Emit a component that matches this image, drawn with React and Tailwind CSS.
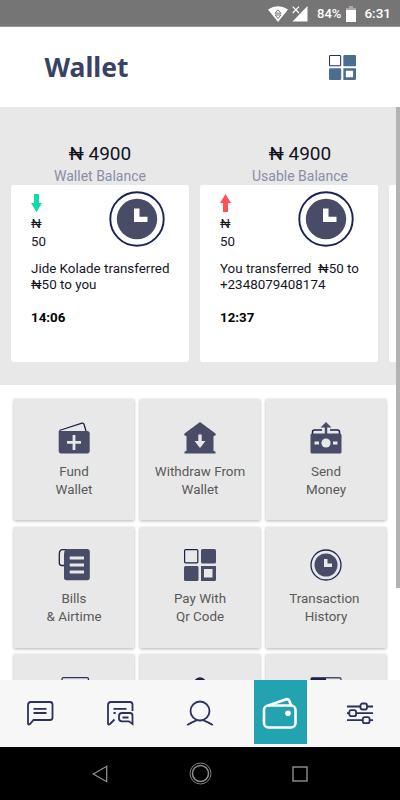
import React from 'react';

const QrIcon = ({ width, height, color, edge }) => (
  <svg width={width} height={height} viewBox="0 0 32 32" preserveAspectRatio="none" fill="none">
    <rect x="0.6" y="0.6" width="13.2" height="13.2" rx="1" stroke={edge} strokeWidth="1.2" />
    <rect x="17" y="0" width="15" height="14.5" rx="1.5" fill={color} />
    <rect x="0" y="17" width="14.5" height="15" rx="1.5" fill={color} />
    <path fillRule="evenodd" d="M17 17h15v13.5a1.5 1.5 0 0 1-1.5 1.5H17zM20 20v8.5h8.5V20z" fill={color} />
  </svg>
);

const ClockIcon = () => (
  <svg width="56" height="56" viewBox="0 0 56 56" fill="none">
    <circle cx="28" cy="28" r="26.7" stroke="#1b2450" strokeWidth="1.9" />
    <circle cx="28" cy="28" r="20.2" fill="#484c66" />
    <path d="M25 17.500h5.500v8.300h8v5.200H25z" fill="#fff" />
  </svg>
);

const FundIcon = () => (
  <svg width="32" height="32" viewBox="0 0 32 32" fill="none">
    <path d="M1.300 8.500 24 1.200c1-.3 1.700.1 2 1L28 9" stroke="#1b2148" strokeWidth="1.300" />
    <path d="M.7 9h28.500c1.500 0 2.500 1 2.500 2.300V29c0 1.500-1 2.500-2.500 2.500h-26C1.700 31.500.7 30.500.7 29z" fill="#484c66" />
    <path d="M16 13v15M9 20.400h14" stroke="#e8e8e8" strokeWidth="2.800" />
  </svg>
);

const WithdrawIcon = () => (
  <svg width="32" height="32" viewBox="0 0 32 32" fill="none">
    <path d="M16 0 31.500 11.500c.7 1.700-.2 2.600-2 2.500V29l2 .6v2H.5v-2l2-.6V14c-1.800.1-2.700-.8-2-2.500z" fill="#484c66" />
    <path d="M14.300 12.500h3.400V19h3.800L16 26l-5.500-7h3.800z" fill="#e8e8e8" />
  </svg>
);

const SendIcon = () => (
  <svg width="32" height="32" viewBox="0 0 32 32" fill="none">
    <path d="M12 8H4.500Q2.500 8 2.500 10v3M20 8h7.500q2 0 2 2v3" stroke="#1b2148" strokeWidth="1.500" />
    <path d="M16 0 21.500 5.500H17.200V12h-2.400V5.500H10.500z" fill="#484c66" />
    <path d="M2 11.500h28q1.500 0 1.500 1.500v17q0 1.500-1.500 1.500H2q-1.500 0-1.500-1.500V13q0-1.500 1.500-1.500z" fill="#484c66" />
    <circle cx="16" cy="21" r="4.600" fill="#e8e8e8" />
    <path d="M4.500 19.500h4.500v3H4.500zM23 19.500h4.500v3H23z" fill="#e8e8e8" />
  </svg>
);

const BillsIcon = () => (
  <svg width="32" height="32" viewBox="0 0 32 32" fill="none">
    <path d="M9 .7H4.800Q1.300.7 1.300 5v9q0 2.500 2.500 2.500H6" stroke="#1b2148" strokeWidth="1.300" />
    <path d="M8 0h21.500Q31.800 0 31.800 2.500V28.500q0 2.800-2.500 2.800H8.500Q6 31.300 6 28.500V5Q6 1.500 8 0z" fill="#484c66" />
    <path d="M11.700 9H26M11.700 16H26M11.700 23H26" stroke="#e8e8e8" strokeWidth="3" />
  </svg>
);

const actions = [
  { lines: ['Fund', 'Wallet'], icon: <FundIcon /> },
  { lines: ['Withdraw From', 'Wallet'], icon: <WithdrawIcon /> },
  { lines: ['Send', 'Money'], icon: <SendIcon /> },
  { lines: ['Bills', '& Airtime'], icon: <BillsIcon /> },
  { lines: ['Pay With', 'Qr Code'], icon: <QrIcon width={32} height={32} color="#484c66" edge="#1b2148" /> },
  {
    lines: ['Transaction ', 'History'],
    icon: (
      <svg width="32" height="32" viewBox="0 0 32 32" fill="none">
        <circle cx="16" cy="16" r="15" stroke="#1b2450" strokeWidth="1.300" />
        <circle cx="16" cy="16" r="11.500" fill="#484c66" />
        <path d="M14 10h3.500v4.500H22V18h-8z" fill="#e8e8e8" />
      </svg>
    ),
  },
];

// Icons of the row that is cut off by the tab bar
const nextIcons = [
  <svg key="a" width="32" height="32" viewBox="0 0 32 32" fill="none">
    <path d="M4 32V4.200Q4 2.700 5.500 2.700H29q1.500 0 1.500 1.500V32" stroke="#2b3158" strokeWidth="1.300" />
  </svg>,
  <svg key="b" width="32" height="32" viewBox="0 0 32 32" fill="none">
    <circle cx="16" cy="8.300" r="6" fill="#1b2148" />
  </svg>,
  <svg key="c" width="32" height="32" viewBox="0 0 32 32" fill="none">
    <path d="M1 32V4.200Q1 2.700 2.500 2.700h27q1.500 0 1.500 1.500V32" stroke="#484c66" strokeWidth="1.400" />
    <path d="M1 3h15v7H1z" fill="#1b2148" />
  </svg>,
];

const transfers = [
  { out: false, lines: ['Jide Kolade transferred', '₦50 to you'], time: '14:06' },
  { out: true, lines: ['You transferred  ₦50 to', '+2348079408174'], time: '12:37' },
];

const TransferCard = ({ item }) => (
  <div className="w-[178px] h-[177px] shrink-0 bg-white rounded-[2px] shadow-[0_1px_1px_rgba(0,0,0,0.06)] pl-5 pt-[6px] text-[13.400px] leading-[15.500px] text-[#15151f]">
    <div className="flex h-[70px]">
      <div className="w-[77.500px] pt-[3px]">
        <svg width="11" height="18" viewBox="0 0 11 18" className="block">
          {item.out ? (
            <path d="M5.500 0 11 9H8v9H3V9H0z" fill="#ff5158" />
          ) : (
            <path d="M3 0h5v9h3L5.500 18 0 9h3z" fill="#0fdcaa" />
          )}
        </svg>
        <div className="text-[13.300px] leading-[18px] mt-[3px]">₦<br />50</div>
      </div>
      <ClockIcon />
    </div>
    <div className="whitespace-pre">
      {item.lines.map(line => <div key={line}>{line}</div>)}
    </div>
    <div className="mt-[17.500px] text-[13.300px] font-bold text-black">{item.time}</div>
  </div>
);

const StatusBar = () => (
  <div className="h-[27px] bg-[#757575] border-b border-[#989898] flex items-center justify-end pr-[9px] pt-px text-white font-medium text-[13.500px]">
    <svg width="20" height="16" viewBox="0 0 20 16" className="mr-[4px]">
      <path d="M0 3.500Q10-3 20 3.500L10 16z" fill="#fff" />
      <path d="M7 7.200 10 3.800l3 3.400zM7 9l3 3.400L13 9z" fill="none" stroke="#757575" />
    </svg>
    <svg width="16" height="16" viewBox="0 0 16 16" className="mr-[9px]">
      <path d="M15.500 0v15.500H.5z" fill="#fff" />
      <path d="M0 0h9v5L4 9H0z" fill="#757575" />
      <path d="M.7.700 7 7M7 .7.700 7" stroke="#fff" strokeWidth="1.200" />
    </svg>
    <span className="mr-[5px] text-[13px]">84%</span>
    <svg width="10" height="16" viewBox="0 0 10 16" className="mr-[8px]">
      <path d="M3 0h4v2h3v3H0V2h3z" fill="#a9a9a9" />
      <path d="M0 4h10v12H0z" fill="#fff" />
    </svg>
    <span>6:31</span>
  </div>
);

const TabBar = () => (
  <div className="h-[67px] bg-[#f7f7f7] grid grid-cols-5 justify-items-center text-[#2b3158]">
    <svg width="28" height="26" viewBox="0 0 28 26" className="mt-5" fill="none" stroke="currentColor" strokeWidth="1.800">
      <path d="M5 2h19q2.500 0 2.500 2.500v13q0 2.500-2.500 2.500H7.500L4 24q-2 1.500-2-1V5q0-3 3-3z" />
      <path d="M7.500 8.800h13M7.500 13h13" />
    </svg>
    <svg width="28" height="26" viewBox="0 0 28 26" className="mt-5" fill="none" stroke="currentColor" strokeWidth="1.800">
      <path d="M26.500 11V4.500Q26.500 2 24 2H5Q2 2 2 5v18q0 2.500 2 1l4.500-4.500" />
      <path d="M7.500 8.800h13M7.500 13h2.200" />
      <path d="M16 13h8q2.500 0 2.500 2.500V24L23 21.300h-7q-3 0-3-3V16q0-3 3-3zM16.500 17.500h6" />
    </svg>
    <svg width="28" height="26" viewBox="0 0 28 26" className="mt-5" fill="none" stroke="currentColor" strokeWidth="1.800">
      <circle cx="14" cy="11" r="9.500" />
      <path d="M1.200 25Q5 22.500 10.500 20.300M26.800 25Q23 22.500 17.500 20.300" />
    </svg>
    <div className="w-[53px] h-16 bg-[#23a2b0] flex justify-center">
      <svg width="36" height="32" viewBox="0 0 36 32" className="mt-[17px]" fill="none" stroke="#fff" strokeWidth="2.600">
        <rect x="2" y="8.500" width="31.500" height="22" rx="4.500" />
        <path d="m5.500 8.800 18-6.300q2.800-1 3.800 1.300l2 5" />
        <circle cx="26" cy="16.200" r="2.800" fill="#fff" stroke="none" />
      </svg>
    </div>
    <svg width="28" height="26" viewBox="0 0 28 26" className="mt-5" fill="none" stroke="currentColor" strokeWidth="1.800">
      <path d="M1 6.500h13M21.500 6.500H27M1 13.200h2M10.500 13.200H27M1 20.200h15M24 20.200h3" />
      <rect x="14.500" y="3.500" width="6.500" height="6" rx="2" />
      <rect x="3.300" y="10.200" width="6.800" height="6" rx="2" />
      <rect x="16.800" y="17.200" width="6.800" height="6" rx="2" />
    </svg>
  </div>
);

export default function App() {
  return (
    <div className="w-[400px] h-[800px] overflow-hidden bg-white flex flex-col font-['Roboto',sans-serif]">
      <StatusBar />
      <header className="h-20 shrink-0 flex items-center justify-between pl-[44.500px] pr-[44px]">
        <h1 className="pt-[2px] font-['Noto_Sans',sans-serif] font-bold text-[26.500px] text-[#3b4163]">Wallet</h1>
        <QrIcon width={27} height={25} color="#4c6c90" edge="#1d2f78" />
      </header>

      <main className="relative h-[573px] shrink-0 overflow-hidden">
        <section className="h-[278px] bg-[#e8e8e8] pt-[35px]">
          <div className="grid grid-cols-2 text-center h-[43px]">
            {['Wallet Balance', 'Usable Balance'].map(label => (
              <div key={label}>
                <div className="text-[19px] leading-6 text-[#12121f]">₦ 4900</div>
                <div className="text-[14px] leading-5 text-[#8a8ea6]">{label}</div>
              </div>
            ))}
          </div>
          <div className="flex gap-[11px] pl-[11px] overflow-hidden">
            {transfers.map(item => <TransferCard key={item.time} item={item} />)}
            <div className="w-[178px] h-[177px] shrink-0 bg-white rounded-[2px]" />
          </div>
        </section>

        <section className="grid grid-cols-3 gap-x-[6px] gap-y-[6.500px] pl-[14px] w-[386px] pt-[14px]">
          {actions.map(action => (
            <div
              key={action.lines[0]}
              className="h-[121px] bg-[#e8e8e8] shadow-[0_1px_3px_rgba(0,0,0,0.3)] flex flex-col items-center pt-[22.500px]"
            >
              {action.icon}
              <div className="mt-[9px] text-center text-[13.400px] leading-[18px] text-[#595959] whitespace-pre">
                {action.lines[0]}<br />{action.lines[1]}
              </div>
            </div>
          ))}
          {nextIcons.map(icon => (
            <div key={icon.key} className="h-[121px] bg-[#e8e8e8] shadow-[0_1px_3px_rgba(0,0,0,0.3)] flex justify-center pt-[20.500px]">
              {icon}
            </div>
          ))}
        </section>
        <div className="absolute right-0 top-0 w-1 h-[481px] bg-[#b3b3b3]" />
      </main>

      <TabBar />
      <nav className="h-[53px] bg-black flex items-center justify-between px-[92px]">
        <svg width="16" height="18" viewBox="0 0 16 18" fill="none" stroke="#8f8f8f" strokeWidth="1.300">
          <path d="M14.700 1.300v15.400L1.300 9z" />
        </svg>
        <svg width="23" height="23" viewBox="0 0 23 23" fill="none" stroke="#8f8f8f">
          <circle cx="11.500" cy="11.500" r="10.500" strokeWidth="0.900" />
          <circle cx="11.500" cy="11.500" r="8" strokeWidth="1.500" />
        </svg>
        <svg width="16" height="16" viewBox="0 0 16 16" fill="none" stroke="#8f8f8f" strokeWidth="1.400">
          <rect x="1" y="1" width="14" height="14" />
        </svg>
      </nav>
    </div>
  );
}
